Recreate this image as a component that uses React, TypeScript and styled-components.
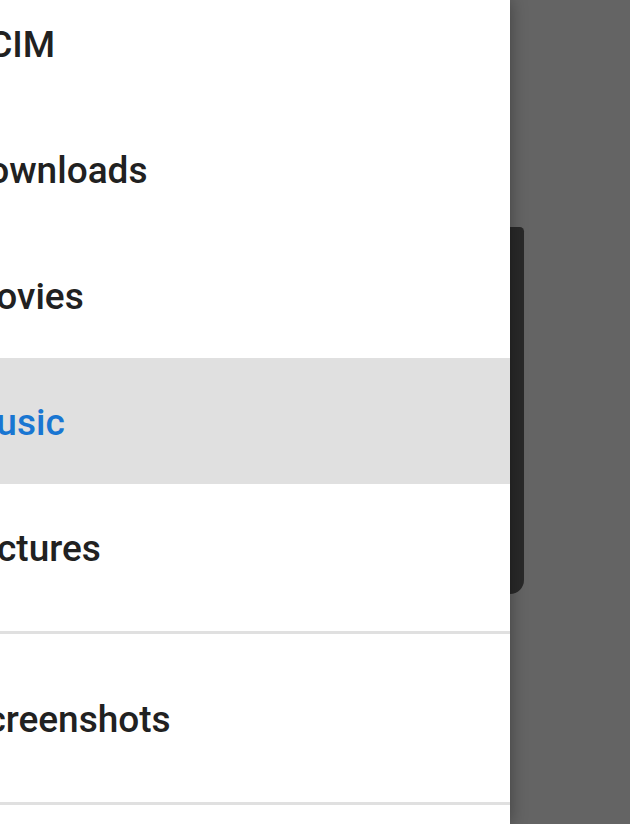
import React from "react";
import styled, { createGlobalStyle } from "styled-components";

const Global = createGlobalStyle`
  html, body { margin: 0; padding: 0; height: 824px; overflow: hidden; background: #fff; }
  #root { height: 824px; }
  * { box-sizing: border-box; }
`;

const Screen = styled.div`
  display: flex;
  width: 630px;
  height: 824px;
  overflow: hidden;
  font-family: Roboto, "Liberation Sans", sans-serif;
`;

const Drawer = styled.nav`
  position: relative;
  z-index: 2;
  flex: 0 0 510px;
  width: 510px;
  height: 824px;
  background: #ffffff;
  box-shadow: 0 0 16px rgba(0, 0, 0, 0.36);
  overflow: hidden;
`;

const List = styled.ul`
  list-style: none;
  margin: -20px 0 0 0;
  padding: 0;
  display: flex;
  flex-direction: column;
`;

const Item = styled.li<{ $active?: boolean; $tall?: boolean }>`
  display: flex;
  align-items: center;
  height: ${(p) => (p.$tall ? "168px" : "126px")};
  padding-top: 2px;
  background: ${(p) => (p.$active ? "#e0e0e0" : "transparent")};
  color: ${(p) => (p.$active ? "#1976d2" : "#212121")};
  font-size: 37px;
  font-weight: 500;
  letter-spacing: 0;
  white-space: nowrap;
`;

const Label = styled.span`
  margin-left: -36px;
`;

const Divider = styled.li<{ $flush?: boolean }>`
  height: 3px;
  margin-top: ${(p) => (p.$flush ? "0" : "21px")};
  background: #e0e0e0;
`;

const Scrim = styled.div`
  flex: 1;
  height: 824px;
  background: #646464;
  display: flex;
  flex-direction: column;
`;

const Sheet = styled.div`
  margin-top: 227px;
  width: 14px;
  height: 367px;
  background: #292929;
  border-radius: 0 14px 46px 0;
`;

const items = ["DCIM", "Downloads", "Movies", "Music", "Pictures"];

export default function App() {
  return (
    <>
      <Global />
      <Screen>
        <Drawer>
          <List>
            {items.map((t) => (
              <Item key={t} $active={t === "Music"}>
                <Label>{t}</Label>
              </Item>
            ))}
            <Divider />
            <Item $tall>
              <Label>Screenshots</Label>
            </Item>
            <Divider $flush />
          </List>
        </Drawer>
        <Scrim>
          <Sheet />
        </Scrim>
      </Screen>
    </>
  );
}
